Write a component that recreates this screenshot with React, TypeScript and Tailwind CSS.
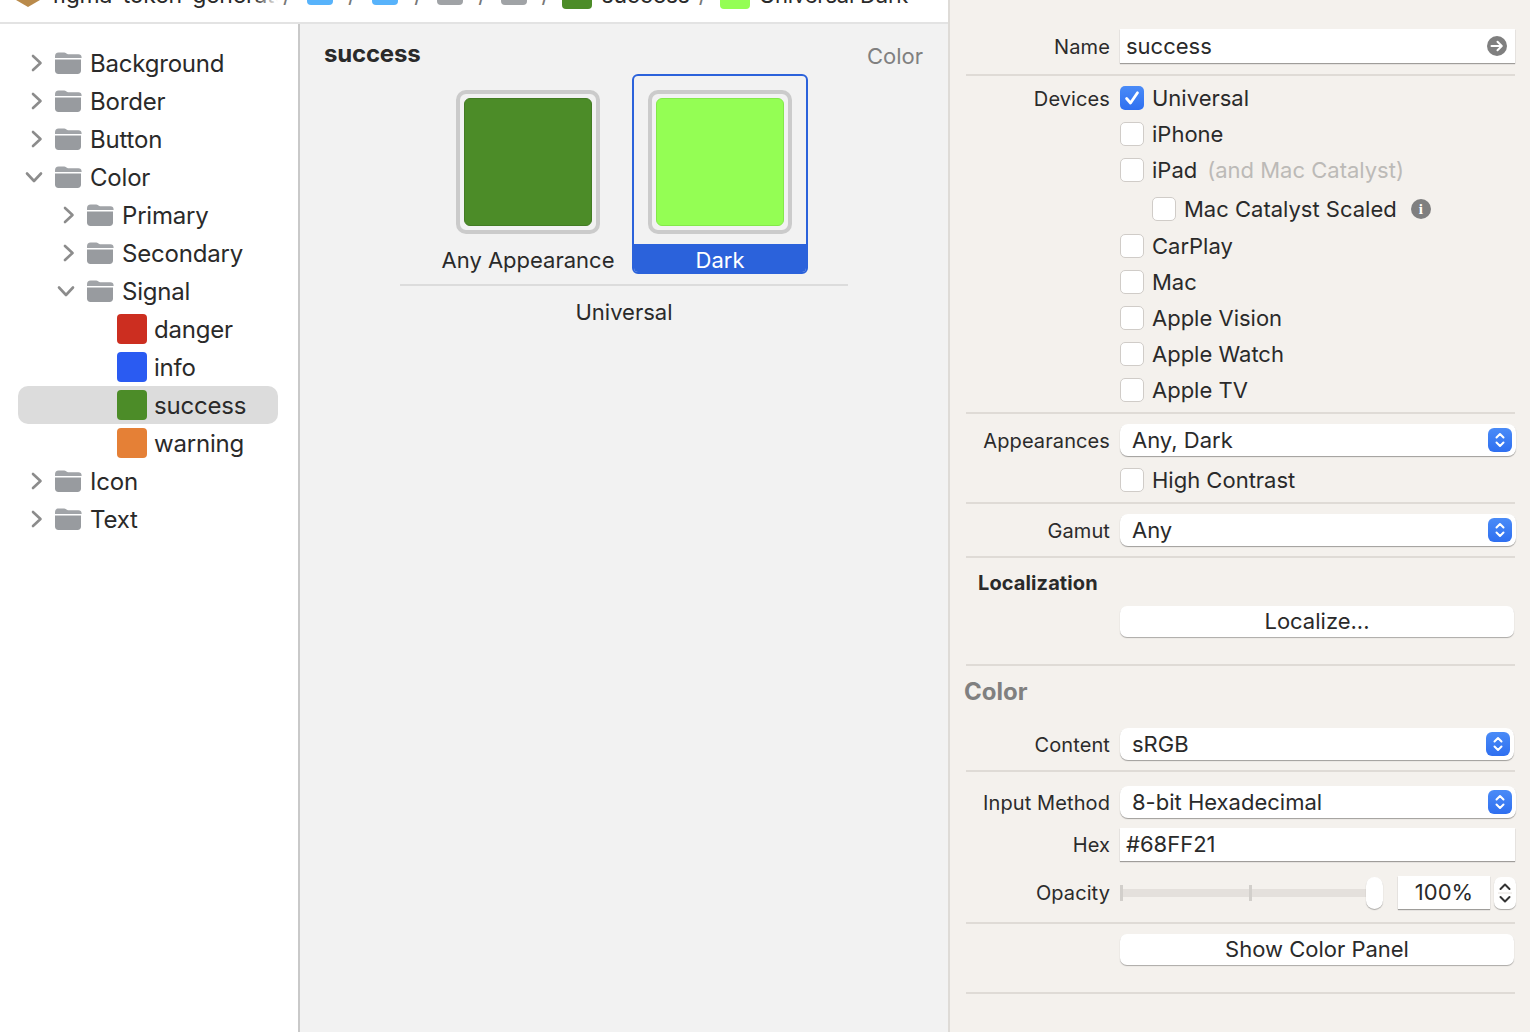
import { ReactNode } from 'react'

function Folder({ className = '' }: { className?: string }) {
  return (
    <svg width="28" height="24" viewBox="0 0 28 24" className={`shrink-0 ${className}`}>
      <path d="M1 5.500C1 3 2.200 1.600 4.600 1.600h5.600c1.600 0 2.200 1.600 3.800 1.600h10.400c2 0 3.200 1.200 3.200 3.200v.6H1z" fill="#a1a4a8" />
      <path d="M1 8.400h26v11.400c0 2-1.300 3.200-3.400 3.200H4.400C2.300 23 1 21.800 1 19.800z" fill="#989b9f" />
    </svg>
  )
}

function Chevron({ open }: { open?: boolean }) {
  if (open) {
    return (
      <svg width="20" height="14" viewBox="0 0 20 14">
        <path d="M3 3.500 10 11l7-7.500" fill="none" stroke="#8c8c8c" strokeWidth="2.600" strokeLinecap="round" strokeLinejoin="round" />
      </svg>
    )
  }
  return (
    <svg width="14" height="20" viewBox="0 0 14 20" className="ml-[6px]">
      <path d="M3 3l7.500 7L3 17" fill="none" stroke="#8c8c8c" strokeWidth="2.600" strokeLinecap="round" strokeLinejoin="round" />
    </svg>
  )
}

function TreeRow({ label, depth, open }: { label: string; depth: number; open?: boolean }) {
  return (
    <div className="flex h-[38px] items-center" style={{ paddingLeft: 22 + depth * 32 }}>
      <div className="flex w-[32px] shrink-0 items-center pl-[2px]">
        <Chevron open={open} />
      </div>
      <Folder />
      <span className="ml-[8px] pt-[2px]">{label}</span>
    </div>
  )
}

function ColorRow({ label, color, selected }: { label: string; color: string; selected?: boolean }) {
  return (
    <div className={`ml-[18px] mr-[20px] flex h-[38px] items-center rounded-[10px] pl-[99px] ${selected ? 'bg-[#dcdcdc]' : ''}`}>
      <div className={`h-[30px] w-[30px] rounded-[4px] ${color}`} />
      <span className="ml-[7px] pt-[2px]">{label}</span>
    </div>
  )
}

function Swatch({ color, inner }: { color: string; inner: string }) {
  return (
    <div className="h-[144px] w-[144px] rounded-[10px] border-[4px] border-[#cbcbcb] p-[4px]">
      <div className={`h-full w-full rounded-[6px] border ${color} ${inner}`} />
    </div>
  )
}

function Divider({ className = '' }: { className?: string }) {
  return <div className={`ml-[16px] mr-[15px] h-[2px] bg-[#dfdbd6] ${className}`} />
}

function Label({ children, className = '' }: { children?: ReactNode; className?: string }) {
  return <div className={`w-[160px] shrink-0 text-right text-[20px] tracking-[0.1px] text-[#2b2b2b] ${className}`}>{children}</div>
}

function Check({ label, checked, note, className = '' }: { label: string; checked?: boolean; note?: string; className?: string }) {
  return (
    <div className={`ml-[170px] flex h-[36px] items-center ${className}`}>
      {checked ? (
        <div className="flex h-[24px] w-[24px] items-center justify-center rounded-[5px] bg-gradient-to-b from-[#4a8bf7] to-[#2f6ff0]">
          <svg width="18" height="18" viewBox="0 0 18 18">
            <path d="M3.600 9.500 7.500 14 14.500 3.800" fill="none" stroke="#fff" strokeWidth="2.800" strokeLinecap="round" strokeLinejoin="round" />
          </svg>
        </div>
      ) : (
        <div className="h-[24px] w-[24px] rounded-[5px] border border-[#d0ccc8] bg-white" />
      )}
      <span className="ml-[8px] text-[22px]">{label}</span>
      {note && <span className="ml-[10px] text-[22px] text-[#bcbab7]">{note}</span>}
    </div>
  )
}

function Stepper() {
  return (
    <div className="flex h-[24px] w-[24px] items-center justify-center rounded-[6px] bg-gradient-to-b from-[#4a8bf7] to-[#2f6ff0]">
      <svg width="12" height="18" viewBox="0 0 12 18">
        <path d="M2.500 6.500 6 3l3.500 3.500M2.500 11.500 6 15l3.500-3.500" fill="none" stroke="#fff" strokeWidth="2" strokeLinecap="round" strokeLinejoin="round" />
      </svg>
    </div>
  )
}

function Select({ value, wide }: { value: string; wide?: boolean }) {
  return (
    <div className={`flex h-[32px] items-center justify-between rounded-[8px] bg-white pl-[12px] pr-[4px] text-[22px] shadow-[0_1px_1px_rgba(0,0,0,0.35)] ${wide ? 'w-[396px]' : 'w-[394px]'}`}>
      <span>{value}</span>
      <Stepper />
    </div>
  )
}

function Button({ label }: { label: string }) {
  return (
    <div className="flex h-[31px] w-[394px] items-center justify-center rounded-[7px] bg-white text-[22px] shadow-[0_1px_1px_rgba(0,0,0,0.3)]">
      {label}
    </div>
  )
}

function Sep({ className = '' }: { className?: string }) {
  return <span className={`text-[#777] ${className}`}>/</span>
}

function CrumbIcon({ color, className = '' }: { color: string; className?: string }) {
  return <div className={`mt-[18px] w-[26px] rounded-b-[4px] ${color} ${className}`} />
}

export default function App() {
  return (
    <div className="flex h-[1032px] w-[1530px] overflow-hidden bg-white text-[24px] tracking-[-0.2px] text-[#2a2a2a] [font-family:Inter,'Liberation_Sans',sans-serif]">
      {/* Editor side */}
      <div className="flex w-[948px] shrink-0 flex-col">
        {/* Jump bar, cut off by the screenshot */}
        <div className="h-[22px] shrink-0 overflow-hidden bg-white">
          <div className="-mt-[18px] flex items-start whitespace-nowrap pl-[16px] text-[23px] leading-[26px]">
            <div className="mt-[18px] h-[7px] w-[24px] bg-[#b98a4b] [clip-path:polygon(0_0,100%_0,50%_100%)]" />
            <div className="relative ml-[12px] w-[226px] overflow-hidden">
              figma-token-generator
              <div className="absolute bottom-0 right-0 top-0 w-[24px] bg-gradient-to-r from-transparent to-white" />
            </div>
            <Sep className="ml-[5px]" />
            <CrumbIcon color="bg-[#58b3fb] h-[5px]" className="ml-[16px]" />
            <Sep className="ml-[15px]" />
            <CrumbIcon color="bg-[#58b3fb] h-[5px]" className="ml-[16px]" />
            <Sep className="ml-[16px]" />
            <CrumbIcon color="bg-[#a0a3a6] h-[5px]" className="ml-[15px]" />
            <Sep className="ml-[15px]" />
            <CrumbIcon color="bg-[#a0a3a6] h-[5px]" className="ml-[15px]" />
            <Sep className="ml-[14px]" />
            <CrumbIcon color="bg-[#4c8c28] h-[9px] !w-[30px]" className="ml-[13px]" />
            <span className="ml-[9px]">success</span>
            <Sep className="ml-[9px]" />
            <CrumbIcon color="bg-[#94fe54] h-[9px] !w-[30px]" className="ml-[13px]" />
            <span className="ml-[9px] text-[22px]">Universal Dark</span>
          </div>
        </div>
        <div className="h-[2px] shrink-0 bg-[#e3e3e3]" />

        <div className="flex min-h-0 flex-1">
          {/* Asset tree */}
          <div className="w-[298px] shrink-0 pt-[20px]">
            <TreeRow label="Background" depth={0} />
            <TreeRow label="Border" depth={0} />
            <TreeRow label="Button" depth={0} />
            <TreeRow label="Color" depth={0} open />
            <TreeRow label="Primary" depth={1} />
            <TreeRow label="Secondary" depth={1} />
            <TreeRow label="Signal" depth={1} open />
            <ColorRow label="danger" color="bg-[#cc2e20]" />
            <ColorRow label="info" color="bg-[#2a5bf2]" />
            <ColorRow label="success" color="bg-[#4c8c28]" selected />
            <ColorRow label="warning" color="bg-[#e58036]" />
            <TreeRow label="Icon" depth={0} />
            <TreeRow label="Text" depth={0} />
          </div>
          <div className="w-[2px] shrink-0 bg-[#c9c9c9]" />

          {/* Color set canvas */}
          <div className="flex-1 bg-[#f2f2f2]">
            <div className="flex items-start justify-between pl-[24px] pr-[25px] pt-[12px]">
              <span className="font-bold">success</span>
              <span className="mt-[4px] text-[22px] tracking-normal text-[#808080]">Color</span>
            </div>
            <div className="ml-[100px] mt-[1px] w-[448px]">
              <div className="flex h-[200px] items-start">
                <div className="ml-[42px] mt-[16px] flex w-[172px] flex-col items-center">
                  <Swatch color="border-[#437b24]" inner="bg-[#4c8c28]" />
                  <span className="mt-[12px] whitespace-nowrap text-[22px] leading-[28px] tracking-normal">Any Appearance</span>
                </div>
                <div className="ml-[18px] flex h-[200px] w-[176px] flex-col overflow-hidden rounded-[6px] border-2 border-[#2b62db]">
                  <div className="flex flex-1 items-start justify-center pt-[14px]">
                    <Swatch color="border-[#84e84a]" inner="bg-[#94fe54]" />
                  </div>
                  <div className="flex h-[28px] items-center justify-center bg-[#2b62db] pt-[4px] text-[22px] tracking-normal text-white">Dark</div>
                </div>
              </div>
              <div className="mt-[10px] h-[2px] bg-[#dcdcdc]" />
              <div className="mt-[12px] text-center text-[22px] leading-[28px] tracking-normal">Universal</div>
            </div>
          </div>
        </div>
      </div>
      <div className="w-[2px] shrink-0 bg-[#dedbd7]" />

      {/* Inspector */}
      <div className="flex-1 bg-[#f4f1ed] tracking-normal">
        <div className="h-[29px] overflow-hidden pl-[14px]">
          <div className="-mt-[23px] text-[24px] font-bold leading-[30px] text-[#808080]">Color Set</div>
        </div>
        <div className="flex h-[34px] items-center">
          <Label className="pt-[2px]">Name</Label>
          <div className="ml-[10px] flex h-[34px] w-[395px] items-center justify-between bg-white pl-[6px] pr-[8px] text-[22px] shadow-[0_1px_1px_rgba(0,0,0,0.35)]">
            <span>success</span>
            <svg width="20" height="20" viewBox="0 0 20 20">
              <circle cx="10" cy="10" r="10" fill="#7f7f7f" />
              <path d="M4.500 10h10M10.500 5.800 14.800 10l-4.300 4.200" fill="none" stroke="#fff" strokeWidth="2" strokeLinecap="round" strokeLinejoin="round" />
            </svg>
          </div>
        </div>
        <Divider className="mt-[11px]" />
        <div className="relative mt-[4px]">
          <div className="absolute left-0 top-[4px]"><Label>Devices</Label></div>
          <Check label="Universal" checked />
          <Check label="iPhone" />
          <Check label="iPad" note="(and Mac Catalyst)" />
          <div className="ml-[202px] mt-[2px] flex h-[38px] items-center">
            <div className="h-[24px] w-[24px] rounded-[5px] border border-[#d0ccc8] bg-white" />
            <span className="ml-[8px] text-[22px]">Mac Catalyst Scaled</span>
            <div className="ml-[14px] flex h-[20px] w-[20px] items-center justify-center rounded-full bg-[#7f7f7f] font-['Liberation_Serif'] text-[15px] font-bold text-white">i</div>
          </div>
          <Check label="CarPlay" />
          <Check label="Mac" />
          <Check label="Apple Vision" />
          <Check label="Apple Watch" />
          <Check label="Apple TV" />
        </div>
        <Divider className="mt-[4px]" />
        <div className="mt-[10px] flex items-center">
          <Label className="pt-[2px]">Appearances</Label>
          <div className="ml-[10px]"><Select value="Any, Dark" wide /></div>
        </div>
        <Check label="High Contrast" className="mt-[6px]" />
        <Divider className="mt-[4px]" />
        <div className="mt-[10px] flex items-center">
          <Label className="pt-[2px]">Gamut</Label>
          <div className="ml-[10px]"><Select value="Any" wide /></div>
        </div>
        <Divider className="mt-[10px]" />
        <div className="ml-[28px] mt-[11px] text-[20px] font-bold leading-[28px] tracking-[0.1px]">Localization</div>
        <div className="ml-[170px] mt-[9px]"><Button label="Localize..." /></div>
        <Divider className="mt-[27px]" />
        <div className="ml-[14px] mt-[11px] text-[24px] font-bold leading-[30px] text-[#808080]">Color</div>
        <div className="mt-[21px] flex items-center">
          <Label className="pt-[2px]">Content</Label>
          <div className="ml-[10px]"><Select value="sRGB" /></div>
        </div>
        <Divider className="mt-[10px]" />
        <div className="mt-[14px] flex items-center">
          <Label className="pt-[2px]">Input Method</Label>
          <div className="ml-[10px]"><Select value="8-bit Hexadecimal" wide /></div>
        </div>
        <div className="mt-[10px] flex items-center">
          <Label>Hex</Label>
          <div className="ml-[10px] flex h-[33px] w-[395px] items-center bg-white pl-[6px] text-[22px] shadow-[0_1px_1px_rgba(0,0,0,0.35)]">#68FF21</div>
        </div>
        <div className="mt-[15px] flex items-center">
          <Label>Opacity</Label>
          <div className="relative ml-[10px] flex h-[32px] w-[263px] items-center">
            <div className="h-[8px] w-full bg-[#e4e0dc]" />
            <div className="absolute left-0 top-[8px] h-[16px] w-[3px] bg-[#d2cfcb]" />
            <div className="absolute left-[129px] top-[8px] h-[16px] w-[3px] bg-[#d2cfcb]" />
            <div className="absolute right-0 top-0 h-[32px] w-[17px] rounded-full bg-white shadow-[0_1px_1px_rgba(0,0,0,0.3)]" />
          </div>
          <div className="ml-[15px] flex h-[33px] w-[92px] items-center justify-center bg-white text-[22px] shadow-[0_1px_1px_rgba(0,0,0,0.35)]">100%</div>
          <div className="ml-[4px] flex h-[32px] w-[22px] items-center justify-center rounded-[7px] bg-white shadow-[0_1px_1px_rgba(0,0,0,0.3)]">
            <svg width="14" height="26" viewBox="0 0 14 26">
              <path d="M2.500 9 7 4.500 11.500 9M2.500 17 7 21.500 11.500 17" fill="none" stroke="#333" strokeWidth="2" strokeLinecap="round" strokeLinejoin="round" />
              <path d="M0 13h14" stroke="#e4e0dc" strokeWidth="1" />
            </svg>
          </div>
        </div>
        <Divider className="mt-[13px]" />
        <div className="ml-[170px] mt-[10px]"><Button label="Show Color Panel" /></div>
        <Divider className="mt-[27px]" />
      </div>
    </div>
  )
}
